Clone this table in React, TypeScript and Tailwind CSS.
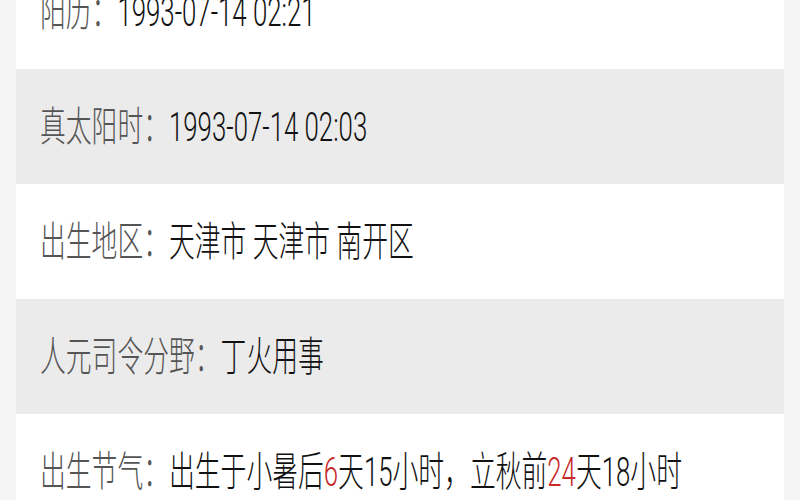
import React from 'react';

type Part = { text: string; red?: boolean };

const rows: { label: string; value: Part[]; gray?: boolean }[] = [
  { label: '阳历：', value: [{ text: '1993-07-14 02:21' }] },
  { label: '真太阳时：', value: [{ text: '1993-07-14 02:03' }], gray: true },
  { label: '出生地区：', value: [{ text: '天津市 天津市 南开区' }] },
  { label: '人元司令分野：', value: [{ text: '丁火用事' }], gray: true },
  {
    label: '出生节气：',
    value: [
      { text: '出生于小暑后' },
      { text: '6', red: true },
      { text: '天15小时，立秋前' },
      { text: '24', red: true },
      { text: '天18小时' },
    ],
  },
];

export default function App() {
  return (
    <div
      className="h-[500px] w-[800px] overflow-hidden bg-[#f5f5f5] px-4"
      style={{ fontFamily: 'Roboto, "Noto Sans CJK SC", sans-serif' }}
    >
      {/* list is scrolled: first row is partly above the top */}
      <div className="-mt-[46px]">
        {rows.map((row) => (
          <div
            key={row.label}
            className={`flex h-[115px] items-center pl-6 pt-[2px] ${row.gray ? 'bg-[#ebebeb]' : 'bg-white'}`}
          >
            <span className="inline-block origin-center scale-y-[1.6] whitespace-nowrap text-[25.8px] font-light leading-none">
              <span className="text-[#555555]">{row.label}</span>
              {row.value.map((p, i) => (
                <span key={i} className={p.red ? 'text-[#c62a2a]' : 'text-[#111111]'}>
                  {p.text}
                </span>
              ))}
            </span>
          </div>
        ))}
      </div>
    </div>
  );
}
